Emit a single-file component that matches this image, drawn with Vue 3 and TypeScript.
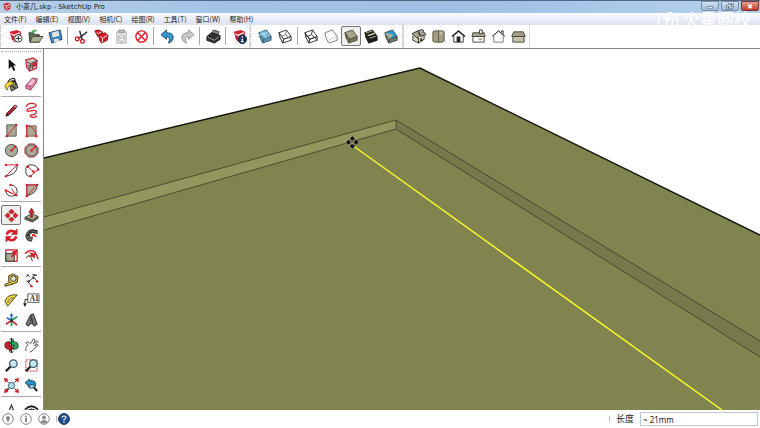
<script setup lang="ts">
import { ref } from 'vue'

interface Tool {
  id: string
  label: string
}

const menus: string[] = ['文件(F)', '编辑(E)', '视图(V)', '相机(C)', '绘图(R)', '工具(T)', '窗口(W)', '帮助(H)']

const t = (id: string, label: string): Tool => ({ id, label })

const toolbars: Tool[][][] = [
  [
    [t('new', '新建'), t('open', '打开'), t('save', '保存')],
    [t('cut', '剪切'), t('copy', '复制'), t('paste', '粘贴'), t('erase', '删除')],
    [t('undo', '撤销'), t('redo', '重做')],
    [t('print', '打印')],
    [t('info', '模型信息')],
  ],
  [
    [t('xray', 'X 光透视模式'), t('backEdges', '后边线')],
    [t('wire', '线框显示'), t('hidden', '消隐'), t('shaded', '阴影'), t('textured', '材质贴图'), t('mono', '单色显示')],
  ],
  [
    [t('iso', '等轴'), t('top', '俯视图'), t('front', '前视图'), t('right', '右视图'), t('back', '后视图'), t('left', '左视图')],
  ],
]

const palette: Tool[][] = [
  [t('select', '选择'), t('component', '制作组件'), t('paint', '材质'), t('eraser', '擦除')],
  [
    t('line', '直线'), t('freehand', '手绘线'), t('rect', '矩形'), t('rotRect', '旋转矩形'), t('circle', '圆'),
    t('polygon', '多边形'), t('arc', '圆弧'), t('arc2', '两点圆弧'), t('arc3', '三点圆弧'), t('pie', '扇形'),
  ],
  [t('move', '移动'), t('push', '推拉'), t('rotate', '旋转'), t('follow', '路径跟随'), t('scale', '缩放'), t('offset', '偏移')],
  [t('tape', '卷尺'), t('dimension', '尺寸'), t('protractor', '量角器'), t('text', '文字'), t('axes', '轴'), t('text3d', '三维文字')],
  [t('orbit', '环绕观察'), t('pan', '平移'), t('zoom', '视图缩放'), t('zoomWin', '缩放窗口'), t('extents', '充满视窗'), t('prevView', '上一个')],
  [t('camera', '定位相机'), t('look', '绕轴旋转')],
]

const cube = (top: string, side: string, stroke = '#333') =>
  `<path d="M1 4 9 1 14 8 6 11z" fill="${top}" stroke="${stroke}"/><path d="M1 4 6 11 5 15 2 9zM6 11 14 8V12L5 15z" fill="${side}" stroke="${stroke}"/>`
const suBox = '<path d="M2 3 9 1 14 3 13 11 7 14 4 11z" fill="#d5202b"/><path d="M3 5 7 7 13 4M7 8v5M5 7l7-3M8 10l4-2" stroke="#fff" fill="none"/>'
const dot = (x: number, y: number) => `<circle cx="${x}" cy="${y}" r="1.3" fill="#d8202a" stroke="none"/>`
const lens = (x: number, y: number) =>
  `<path d="M${x - 3} ${y + 3} ${x - 8} ${y + 8}" stroke="#222" stroke-width="2.4"/><circle cx="${x}" cy="${y}" r="4" fill="#c5e3f2" stroke="#345669" stroke-width="1.3"/><path d="M${x - 2} ${y - 1}q1-2 3-1" stroke="#fff" fill="none"/>`
const compass = '<path d="M8 1 11 4 9 6H7L5 4zM8 15 5 12 7 10H9L11 12zM1 8 4 5 6 7V9L4 11zM15 8 12 11 10 9V7L12 5z"/>'

const icons: Record<string, string> = {
  new: suBox + '<circle cx="11" cy="10" r="4" fill="#fff" stroke="#333"/><path d="M11 7.5v5M8.500 10h5" stroke="#222"/>',
  open: '<path d="M1 4h5l1 2h5v8H2z" fill="#626852" stroke="#383c2d"/><path d="M2 14 5 8h11l-4 6z" fill="#a9ad91" stroke="#4b503c"/><path d="M4 5q0-4 5-3" stroke="#35a546" stroke-width="1.8" fill="none"/>',
  save: '<path d="M1 4 13 1 15 11 4 15z" fill="#3f86bd" stroke="#2a4c68"/><path d="M4 4 11 2 12 7 5 9z" fill="#fff"/><path d="M6 11 11 10 12 13 7 14z" fill="#dce5ea"/><path d="M5 5 11 4M5 7 11 5" stroke="#999" stroke-width=".5"/>',
  cut: '<path d="M14 3 5 10M6 2 9 12" stroke="#333" stroke-width="1.6"/><circle cx="3.500" cy="10.500" r="2" fill="none" stroke="#c41f2a" stroke-width="1.4"/><circle cx="9" cy="13" r="2" fill="none" stroke="#c41f2a" stroke-width="1.4"/>',
  copy: '<path d="M1 2 5 1 9 3 8 7 4 8z" fill="#d5202b" stroke="#811"/><path d="M5 6 12 4 15 7 14 12 8 15 6 12z" fill="#d5202b" stroke="#911"/><path d="M7 8 9 10 14 7M9 10v4M3 4l2 1 3-2" stroke="#fff" fill="none"/>',
  paste: '<path d="M3 3h10v12H3z" fill="#eee" stroke="#aaa"/><path d="M5 1h6v3H5z" fill="#bbb" stroke="#999"/><path d="M5 8 8 6 11 8V12L8 14 5 12zM5 8 8 10 11 8" fill="none" stroke="#aaa"/>',
  erase: '<circle cx="8" cy="8" r="6" fill="#fff" stroke="#df1820" stroke-width="1.5"/><path d="M4 4 12 12M12 4 4 12" stroke="#df1820" stroke-width="1.5"/>',
  undo: '<path d="M1 6 7 1V4Q15 4 14 10 13 14 9 15 12 9 7 8V11z" fill="#3498d2" stroke="#20516f"/>',
  redo: '<path d="M15 6 9 1V4Q1 4 2 10 3 14 7 15 4 9 9 8V11z" fill="#c7c7c7" stroke="#999"/>',
  print: '<path d="M5 6 8 1 14 3 12 8z" fill="#888" stroke="#444"/><path d="M1 8 6 4 15 7V11L9 15 1 12z" fill="#333" stroke="#161616"/><path d="M2 9 9 12 14 8" stroke="#999" fill="none"/>',
  info: suBox + '<circle cx="11" cy="11" r="4.500" fill="#17386a" stroke="#0b1d3a"/><path d="M11 7.500v1.500M11 10v3.500M9.500 13.500h3" stroke="#fff" stroke-width="1.300"/>',
  xray: cube('#7db7d8', '#5a94b9', '#3b657e') + '<path d="M4 3 9 10M1 7 10 4" stroke="#b9dff1" fill="none"/>',
  backEdges: cube('#fff', '#fff') + '<path d="M9 1 8 6 14 11M8 6 2 9" stroke="#777" fill="none"/>',
  wire: cube('none', 'none') + '<path d="M9 1 8 6 14 12M8 6 2 9" stroke="#333" fill="none"/>',
  hidden: '<path d="M1 4 9 1 14 8V12L5 15 2 9z" fill="#fff" stroke="#777"/><path d="M6 11 14 8M6 11 5 15" stroke="#ccc"/>',
  shaded: cube('#aaa68b', '#77745e', '#55533f'),
  textured: cube('#d1cfab', '#25251c', '#222') + '<path d="M2 6 10 3M4 9 13 6M7 13 14 11" stroke="#171711" stroke-width="2"/>',
  mono: cube('#299cda', '#7c7a65', '#31505f') + '<path d="M1 4 6 11 10 6z" fill="#b6af90"/>',
  iso: '<path d="M2 7V12L8 15V10M8 10v5L14 11V6" fill="#ddd9bd" stroke="#333"/><path d="M1 5 7 2 10 6 7 10zM7 2 12 1 16 6 10 8z" fill="#a7a28b" stroke="#333"/><path d="M11 10v3" stroke="#222" stroke-width="2"/><path d="M10 1h3v3" fill="#fff" stroke="#333"/>',
  top: '<path d="M2 3 4 2h8l2 1v10l-2 1H4l-2-1z" fill="#a39f83" stroke="#595641"/><path d="M8 2v12" stroke="#595641"/><path d="M9 3h3v3H9z" fill="#c7c3a8"/>',
  front: '<path d="M3 7v7h10V7L8 2z" fill="#fff" stroke="#333"/><path d="M1 8 8 2 15 8" fill="none" stroke="#222" stroke-width="1.500"/><path d="M6 8h4v6H6z" fill="#222"/>',
  right: '<path d="M2 8h12v6H2z" fill="#fff" stroke="#444"/><path d="M1 8 2 4h12l1 4z" fill="#a7a28a" stroke="#444"/><path d="M9 1h3v4H9z" fill="#fff" stroke="#333"/><path d="M8 10h4v2H8z" fill="#aaa68d"/>',
  back: '<path d="M3 7v7h10V7L8 2z" fill="#fff" stroke="#777"/><path d="M1 8 8 2 15 8M11 4V2h2v4" fill="none" stroke="#333"/>',
  left: '<path d="M2 8h12v6H2z" fill="#c5c2aa" stroke="#444"/><path d="M1 7 3 3h10l2 4v1H1z" fill="#a39e84" stroke="#444"/>',
  select: '<path d="M5 2V13L8 10 10 15 12 14 10 9H13z" fill="#151515"/>',
  component: '<path d="M2 3 10 1 14 4 13 12 6 15 3 11z" fill="#c9c6ba" stroke="#cf2338" stroke-width="1.400"/><path d="M3 5 7 7 14 4M7 7 6 15M4 9h3l6-3M4 12l8-3M10 5l-1 8" stroke="#444" fill="none"/><path d="M9 7l4-2v4l-4 2z" fill="#c6283a"/>',
  paint: '<path d="M5 5 11 2 15 11 8 15z" fill="#888c6a" stroke="#222"/><ellipse cx="8" cy="4" rx="4" ry="2" fill="#ddd" stroke="#222" transform="rotate(-28 8 4)"/><path d="M9 4Q2 5 1 10 1 13 4 14 3 9 10 8z" fill="#eed431" stroke="#4b4419" stroke-width=".7"/><path d="M8 5q4-3 5 4M8 9l4 3" stroke="#222" fill="none" stroke-width="1.300"/>',
  eraser: '<path d="M2 9 9 1 14 2 13 6 7 14 2 12z" fill="#e889ae" stroke="#8d4862"/><path d="M2 9 7 10 14 2M7 10v4" stroke="#a75173" fill="none"/><path d="M4 8 9 3l3 1-4 5z" fill="#ffc1d6"/>',
  line: '<path d="M2 14 3 11 12 2 14 4 5 13z" fill="#b7222c" stroke="#3c1a1c"/><path d="M2 14 3 11 5 13z" fill="#222"/><path d="M11 3 13 5" stroke="#fff"/>',
  freehand: '<path d="M2 4C5-2 13 1 13 3S3 5 3 8 14 5 13 10 5 11 7 14 12 15 14 14" stroke="#d52533" fill="none" stroke-width="1.400"/>',
  rect: '<path d="M3 2h10v12H3z" fill="#a8a994" stroke="#55564a"/><path d="M3 14 13 2" stroke="#d8202a"/>' + dot(3, 14) + dot(13, 2),
  rotRect: '<path d="M3 3h10v11H3z" fill="#a8a994" stroke="#85605a"/><path d="M3 14V3Q12 3 13 14" stroke="#d8202a" fill="none"/>' + dot(3, 3) + dot(13, 14) + dot(3, 14),
  circle: '<circle cx="8" cy="8" r="6.500" fill="#aaab98" stroke="#444"/><path d="M8 8 12 4" stroke="#d8202a" stroke-width="1.300"/>' + dot(8, 8) + dot(12, 4),
  polygon: '<path d="M5 1h6l4 4v6l-4 4H5l-4-4V5z" fill="#aaab98" stroke="#a92e42"/><circle cx="8" cy="8" r="6" fill="none" stroke="#555"/><path d="M8 8 12 4" stroke="#d8202a" stroke-width="1.300"/>' + dot(8, 8) + dot(12, 4),
  arc: '<path d="M14 2Q15 12 2 14" stroke="#333" fill="none"/><path d="M2 2H14L2 14" stroke="#d8202a" fill="none"/>' + dot(2, 2) + dot(14, 2) + dot(2, 14),
  arc2: '<path d="M2 9Q1 1 9 2M9 2Q15 3 15 8M2 9q0 6 5 5" stroke="#333" fill="none"/><path d="M4 4 10 9M7 14 15 7" stroke="#d8202a"/>' + dot(4, 4) + dot(10, 9) + dot(7, 14) + dot(15, 7),
  arc3: '<path d="M7 2Q14 3 14 9 14 14 8 14 3 14 2 9" stroke="#333" fill="none"/><path d="M2 8 13 13 8 6M2 8 9 11" stroke="#d8202a" fill="none"/>' + dot(2, 8) + dot(7, 2) + dot(13, 13),
  pie: '<path d="M3 14V2H14Q15 10 3 14z" fill="#b0b19d" stroke="#444"/><path d="M3 14V2H14z" stroke="#d8202a" fill="none"/>' + dot(3, 2) + dot(14, 2) + dot(3, 14),
  move: `<g fill="#d71f24" stroke="#8f1216" stroke-width=".4">${compass}</g>`,
  push: '<path d="M1 10 8 6 15 9 9 13z" fill="#b2b18f" stroke="#444"/><path d="M1 10v2L9 15 15 11V9L9 13z" fill="#6e6e55" stroke="#444"/><path d="M7 10V5H5L8 0 11 5H9V10z" fill="#d8202a" stroke="#791217" stroke-width=".6"/>',
  rotate: '<path d="M3 7Q4 3 8 3 10 3 12 5M13 9Q12 13 8 13 6 13 4 11" fill="none" stroke="#dc2027" stroke-width="2.800"/><path d="M14 1V7H8zM2 15V9H8z" fill="#dc2027" stroke="#7e1519" stroke-width=".5"/>',
  follow: '<path d="M14 3Q4-1 2 8 2 14 8 14L9 10Q5 10 6 7 8 3 14 6z" fill="#77756a" stroke="#252525"/><path d="M14 3Q5 1 4 9M11 4v2M5 4l3 1M3 8h3M4 12l2-2" stroke="#222" fill="none"/><path d="M8 6 12 7 14 10 11 9 9 9z" fill="#d8202a"/>',
  scale: '<path d="M2 2h12v12H2z" fill="#fff" stroke="#d8202a" stroke-width="1.400"/><path d="M2 6h9v8H2z" fill="#a9a991" stroke="#333"/><path d="M7 9 10 6 8 4 14 2 13 8 11 7 9 10z" fill="#d8202a"/>',
  offset: '<path d="M1 6Q11-3 15 12" stroke="#d8202a" fill="none" stroke-width="1.500"/><path d="M2 11Q6 4 9 14" stroke="#333" fill="none"/><path d="M5 9 8 7 6 5 12 6 11 11 9 9z" fill="#d8202a" stroke="#811" stroke-width=".5"/>',
  tape: '<path d="M5 3 10 1 15 4 14 10 9 12 5 9z" fill="#e8cb38" stroke="#3b3513"/><circle cx="10" cy="6" r="3" fill="#ddd" stroke="#333"/><path d="M6 10 1 12V14L9 12" fill="#f0d639" stroke="#333"/>',
  dimension: '<path d="M3 8 8 14M9 3 14 9M5 9 10 5" stroke="#333" fill="none"/><path d="M4 10l1-3 2 2zM11 4l-1 3-2-2z" fill="#333"/><path d="M2 4 5 2M3 1l3 3M9 1l2 2 3-1" stroke="#333"/>' + dot(8, 14) + dot(14, 9),
  protractor: '<path d="M14 2Q3 1 1 9L4 14z" fill="#ecd73b" stroke="#4b471d"/><path d="M10 5Q5 5 4 10z" fill="#fff" stroke="#575020" stroke-width=".7"/>',
  text: '<path d="M4 1h12v9H4z" fill="#fff" stroke="#555"/><text x="6" y="8" font-family="Liberation Serif" font-size="8" font-weight="700" fill="#333">A1</text><path d="M4 7H1v6" stroke="#222" fill="none"/><path d="M-1 11h4l-2 4z" fill="#222"/>',
  axes: '<path d="M8 8V1M8 8 3 5" stroke="#246cc5" stroke-width="1.800"/><path d="M8 8 2 12M8 8 14 13" stroke="#d8202a" stroke-width="1.800"/><path d="M8 8 14 4M8 8v6" stroke="#179c51" stroke-width="1.800"/><path d="M6 3 8 0 10 3z" fill="#246cc5"/><circle cx="8" cy="8" r="1.500" fill="#333"/>',
  text3d: '<path d="M2 12 7 2 10 1 14 12 11 14 9 11 6 12 5 14z" fill="#777a70" stroke="#222"/><path d="M7 2 10 13M7 9 9 8 8 5z" fill="#ddd" stroke="#333"/>',
  orbit: '<path d="M1 8Q0 4 6 4V7Q3 8 6 9V7L10 11 6 14V12Q1 12 1 8z" fill="#d8202a" stroke="#601819"/><path d="M15 8Q16 12 10 12V9Q13 8 10 7V9L6 5 10 2V4Q15 4 15 8z" fill="#31a55c" stroke="#164c2b"/><path d="M8 0V16M6 2 8 0 10 2M6 14 8 16 10 14" stroke="#222" fill="none"/>',
  pan: '<path d="M2 14Q1 10 4 7L2 5 4 4 7 6 10 1 12 2 10 6 14 3 15 4 11 8 15 7V8L11 11Q9 15 6 15" fill="#f9f9f6" stroke="#555"/>',
  zoom: lens(10, 6),
  zoomWin: '<path d="M2 2h12v12H2z" fill="#fff" stroke="#d8202a" stroke-dasharray="2 1"/>' + lens(10, 6),
  extents: '<path d="M5 11 2 14" stroke="#333" stroke-width="2"/><circle cx="8" cy="8" r="3.300" fill="#b8daec" stroke="#345669"/><path d="M5 5 1 1M11 5 15 1M11 11 15 15" stroke="#222"/><path d="M0 0 5 1 1 5zM16 0 11 1 15 5zM16 16 15 11 11 15zM0 16 1 11 5 15z" fill="#d8202a"/>',
  prevView: '<path d="M9 8 14 14" stroke="#222" stroke-width="2.200"/><circle cx="8" cy="7" r="4" fill="#9acbe2" stroke="#294f63"/><path d="M1 5 6 1V3Q14 2 12 9 10 6 6 7V9z" fill="#2f91c9" stroke="#245068"/>',
  camera: '<path d="M4 15 7 4h2l3 11M8 4V1M6 11q2-3 4 0" stroke="#333" fill="none" stroke-width="1.300"/>',
  look: '<path d="M1 7Q8 0 15 7" fill="none" stroke="#222" stroke-width="2"/><path d="M1 10Q8 3 15 10 8 14 1 10z" fill="#fff" stroke="#333"/><circle cx="8" cy="9" r="3" fill="#333"/>',
}

const activeTool = ref('move')
const activeStyle = ref('shaded')
const length = ref('~ 21mm')
</script>

<template>
  <div class="window">
    <header class="titlebar">
      <svg class="app-icon" viewBox="0 0 16 16" v-html="suBox"></svg>
      <h1>小茶几.skp - SketchUp Pro</h1>
      <div class="controls">
        <button type="button" aria-label="最小化"><svg viewBox="0 0 18 10"><path d="M6 5h6v2H6z" fill="#fff" stroke="#476078" stroke-width=".7" /></svg></button>
        <button type="button" aria-label="还原"><svg viewBox="0 0 18 10"><path d="M8 2h4v4H8zM6 4h4v4H6z" fill="none" stroke="#476078" stroke-width="2" /><path d="M8 2h4v4H8zM6 4h4v4H6z" fill="none" stroke="#fff" stroke-width=".8" /></svg></button>
        <button type="button" class="close" aria-label="关闭"><svg viewBox="0 0 18 10"><path d="M7 3 11 7M11 3 7 7" stroke="#fff" stroke-width="1.800" /></svg></button>
      </div>
    </header>

    <nav class="menubar">
      <button v-for="m in menus" :key="m" type="button">{{ m }}</button>
    </nav>

    <div class="toolbars">
      <div v-for="(bar, b) in toolbars" :key="b" class="bar">
        <div v-for="(group, g) in bar" :key="g" class="group">
          <button
            v-for="tool in group"
            :key="tool.id"
            type="button"
            class="tool"
            :class="{ active: tool.id === activeStyle }"
            :aria-label="tool.label"
          >
            <svg viewBox="0 0 16 16" v-html="icons[tool.id]"></svg>
          </button>
        </div>
      </div>
    </div>

    <main class="workspace">
      <aside class="palette">
        <div v-for="(group, g) in palette" :key="g" class="section">
          <button
            v-for="tool in group"
            :key="tool.id"
            type="button"
            class="tool"
            :class="{ active: tool.id === activeTool }"
            :aria-label="tool.label"
            @click="activeTool = tool.id"
          >
            <svg viewBox="0 0 16 16" v-html="icons[tool.id]"></svg>
          </button>
        </div>
      </aside>
      <div class="viewport">
        <svg class="scene" viewBox="0 0 716 361" preserveAspectRatio="xMinYMin slice">
          <path d="M0 109 376 19 716 186V361H0z" fill="#828450" />
          <path d="M0 168 352 71V80L0 181z" fill="#93975e" />
          <path d="M352 71 716 292V308L352 80z" fill="#77784b" />
          <path d="M0 168 352 71 716 292M0 181 352 80 716 308M352 71V80" fill="none" stroke="#3b3b25" stroke-width=".8" />
          <path d="M0 109 376 19 716 186" fill="none" stroke="#15150e" stroke-width="1.400" />
          <path d="M308 96 678 361" stroke="#f6f72b" stroke-width="1.500" />
          <g class="cursor" transform="translate(301 86) scale(.92)" v-html="compass"></g>
        </svg>
      </div>
    </main>

    <footer class="status">
      <button type="button" class="round" aria-label="地理位置"><svg viewBox="0 0 12 12"><circle cx="6" cy="6" r="5.300" fill="#fff" stroke="#888" /><path d="M6 10 4 5a2 2 0 1 1 4 0z" fill="#888" /></svg></button>
      <button type="button" class="round" aria-label="归属"><svg viewBox="0 0 12 12"><circle cx="6" cy="6" r="5.300" fill="#fff" stroke="#888" /><circle cx="6" cy="3.500" r="1" fill="#888" /><path d="M5 5h2v4H5z" fill="#888" /></svg></button>
      <button type="button" class="round" aria-label="登录"><svg viewBox="0 0 12 12"><circle cx="6" cy="6" r="5.300" fill="#fff" stroke="#888" /><circle cx="6" cy="4.500" r="2" fill="#888" /><path d="M2 9q4-4 8 0-4 3-8 0z" fill="#888" /></svg></button>
      <div class="help">
        <button type="button" class="round" aria-label="帮助"><svg viewBox="0 0 12 12"><circle cx="6" cy="6" r="5.400" fill="#1c4f91" stroke="#172d4d" /><path d="M4 4.500Q4 3 6 3T8 4.500Q8 5.500 6 6.500V7.500M6 8.500v1.300" fill="none" stroke="#fff" stroke-width="1.200" /></svg></button>
      </div>
      <div class="measure">
        <label for="length">长度</label>
        <input id="length" v-model="length" type="text" />
      </div>
    </footer>

    <div class="watermark">
      <svg viewBox="0 0 22 16"><path d="M4 1Q-1 8 3 15M7 5Q13-3 18 4 24 10 18 15M6 8 11 5 9 14M11 9Q14 5 17 7 14 10 16 14" fill="none" stroke="#fff" stroke-width="2" /></svg>
      <span>火星网校</span>
    </div>
  </div>
</template>

<style>
html,
body {
  height: 100%;
}

body {
  margin: 0;
}

#app {
  height: 100%;
}
</style>

<style scoped>
.window {
  position: relative;
  display: flex;
  flex-direction: column;
  height: 100%;
  overflow: hidden;
  background: #fff;
  color: #222;
  font-family: "Noto Sans", "Noto Sans CJK SC", sans-serif;
}

button {
  padding: 0;
  border: 0;
  background: none;
  color: inherit;
  font: inherit;
}

svg {
  display: block;
}

.titlebar {
  display: flex;
  flex: none;
  align-items: center;
  height: 12px;
  padding: 0 1px 0 2px;
  border-top: 1px solid #53687e;
  background: linear-gradient(90deg, #b8cfe9, #a3c3e6 30%, #9fc0e4 60%, #b5d0ec);
}

.app-icon {
  width: 10px;
  height: 10px;
}

h1 {
  flex: 1;
  margin: 0 0 0 4px;
  font-family: "DejaVu Sans", "Noto Sans CJK SC", sans-serif;
  font-size: 7px;
  font-weight: 400;
  line-height: 12px;
}

.controls {
  display: flex;
  align-self: flex-start;
  gap: 2px;
}

.controls button {
  box-sizing: border-box;
  width: 18px;
  height: 10px;
  border: 1px solid #7890aa;
  border-radius: 0 0 2px 2px;
  background: linear-gradient(#d2e2f2, #9dbad7);
}

.controls .close {
  border-color: #7a3431;
  background: linear-gradient(#e4a18f, #c2392a);
}

.menubar {
  display: flex;
  flex: none;
  gap: 9px;
  height: 12px;
  padding-left: 4px;
  background: linear-gradient(#fbfcfe, #e5eaf7 60%, #dce2f0);
  font-family: "Noto Sans CJK SC", sans-serif;
  font-size: 7px;
  line-height: 12px;
}

.toolbars {
  display: flex;
  flex: none;
  height: 23px;
  border-bottom: 1px solid #858585;
}

.bar {
  display: flex;
  align-items: center;
  padding: 0 1px 1px 4px;
  border-left: 1px dotted #bbb;
  border-right: 1px solid #ddd;
}

.bar:first-child {
  padding-right: 0;
}

.group {
  display: flex;
}

.group + .group::before {
  content: "";
  width: 1px;
  height: 18px;
  margin: 1px 3px 0 2px;
  background: #aaa;
}

.tool {
  box-sizing: border-box;
  display: grid;
  place-items: center;
  width: 20px;
  height: 20px;
}

.tool svg {
  width: 15px;
  height: 15px;
  overflow: visible;
}

.tool.active {
  border: 1px solid #777;
  border-radius: 2px;
  background: #eee;
}

.workspace {
  display: flex;
  flex: 1;
  min-height: 0;
}

.palette {
  box-sizing: border-box;
  flex: none;
  width: 44px;
  padding: 2px 2px 0 1px;
  border-right: 1px solid #858585;
  overflow: hidden;
}

.section {
  display: grid;
  grid-template-columns: 20px 20px;
  padding: 3px 0 1px;
  border-top: 1px solid #aaa;
}

.section:first-child {
  padding: 2px 0;
  border-top: 1px dotted #aaa;
}

.viewport {
  flex: 1;
  min-width: 0;
  overflow: hidden;
}

.scene {
  width: 100%;
  height: 100%;
}

.cursor {
  fill: #111;
  stroke: #cfcfb8;
  stroke-width: 1;
  paint-order: stroke;
}

.status {
  display: flex;
  flex: none;
  align-items: center;
  gap: 6px;
  height: 18px;
  padding: 0 2px;
}

.round,
.round svg {
  width: 12px;
  height: 12px;
}

.help,
.measure {
  display: flex;
  align-items: center;
  gap: 6px;
}

.help {
  gap: 1px;
}

.help::before,
.measure::before {
  content: "";
  width: 1px;
  height: 6px;
  background: #bbb;
}

.measure {
  margin-left: auto;
}

.measure label {
  font-size: 9px;
  line-height: 14px;
}

.measure input {
  box-sizing: border-box;
  width: 118px;
  height: 14px;
  padding: 0 2px;
  border: 1px solid #b9c6d3;
  background: #fff;
  color: #222;
  font: inherit;
  font-size: 8px;
}

.watermark {
  position: absolute;
  top: 12px;
  right: 9px;
  display: flex;
  gap: 4px;
  align-items: center;
  color: #fff;
  font-size: 17px;
  font-weight: 500;
  line-height: 16px;
  opacity: 0.9;
  pointer-events: none;
}

.watermark svg {
  width: 22px;
  height: 16px;
}
</style>
